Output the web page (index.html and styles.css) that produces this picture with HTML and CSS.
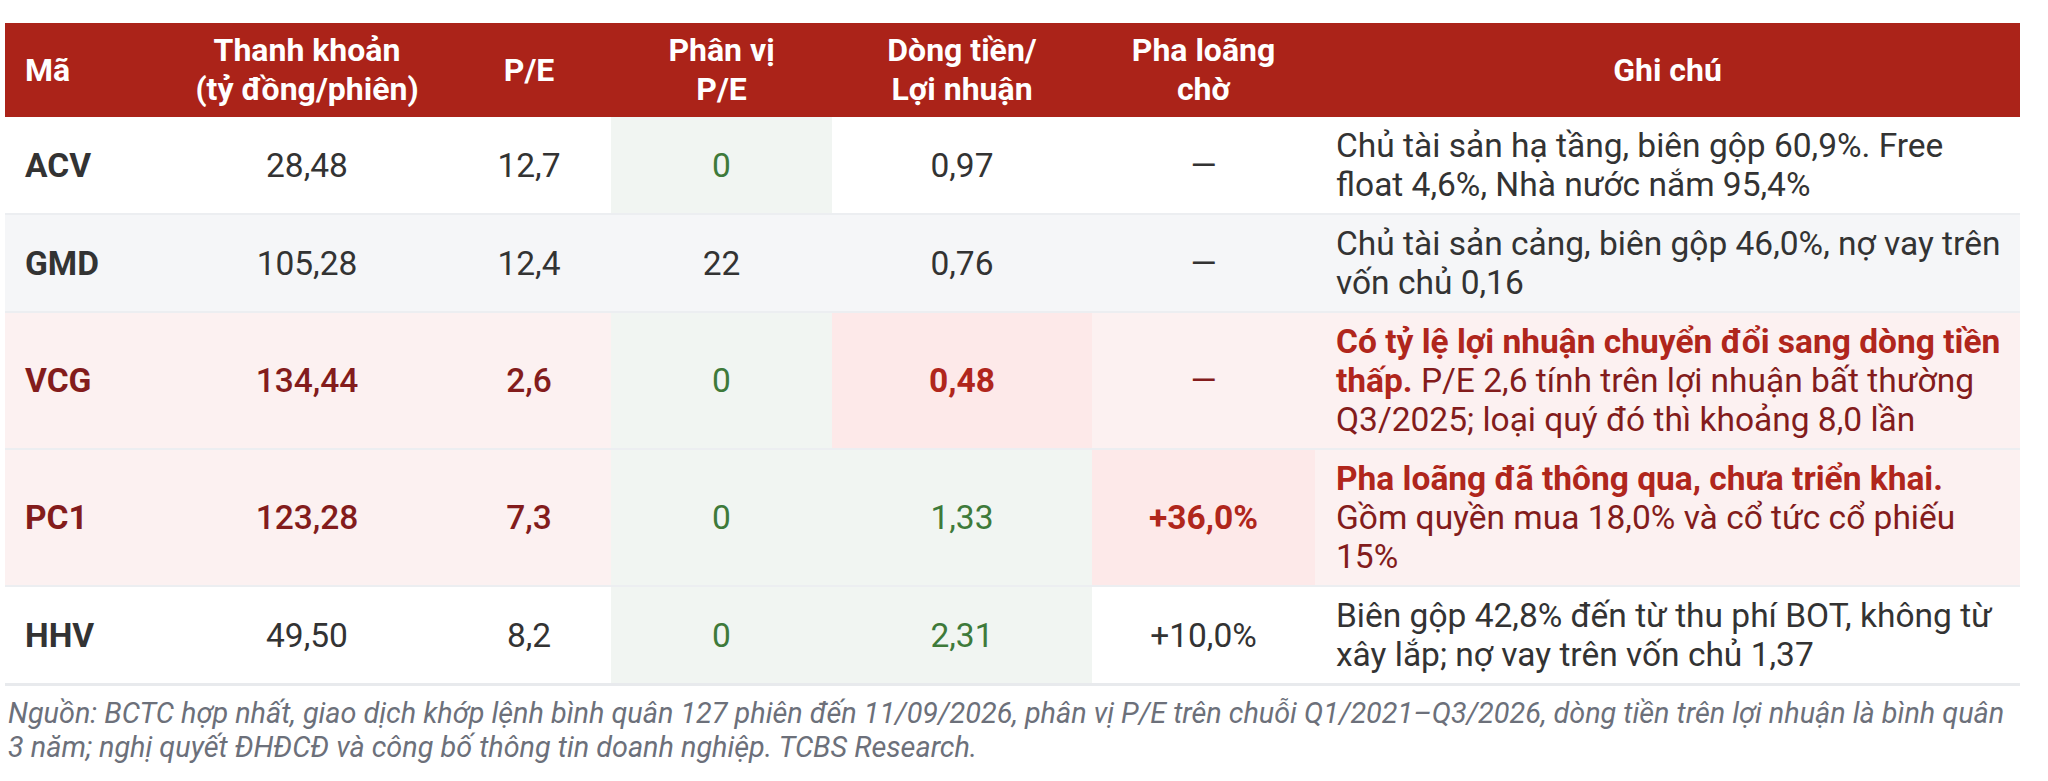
FILE: index.html
```html
<!DOCTYPE html>
<html lang="vi">
<head>
<meta charset="utf-8">
<title>Bảng so sánh</title>
<link rel="stylesheet" href="styles.css">
</head>
<body>
<div class="wrap">
  <table class="tbl">
    <colgroup>
      <col class="c-ma">
      <col class="c-tk">
      <col class="c-pe">
      <col class="c-pv">
      <col class="c-dt">
      <col class="c-pl">
      <col class="c-gc">
    </colgroup>
    <thead>
      <tr>
        <th class="left">Mã</th>
        <th>Thanh khoản<br>(tỷ đồng/phiên)</th>
        <th>P/E</th>
        <th>Phân vị<br>P/E</th>
        <th>Dòng tiền/<br>Lợi nhuận</th>
        <th>Pha loãng<br>chờ</th>
        <th>Ghi chú</th>
      </tr>
    </thead>
    <tbody>
      <tr class="r-white">
        <td class="ma">ACV</td>
        <td class="num">28,48</td>
        <td class="num">12,7</td>
        <td class="num green-bg green">0</td>
        <td class="num">0,97</td>
        <td class="num">—</td>
        <td class="note">Chủ tài sản hạ tầng, biên gộp 60,9%. Free float 4,6%, Nhà nước nắm 95,4%</td>
      </tr>
      <tr class="r-gray">
        <td class="ma">GMD</td>
        <td class="num">105,28</td>
        <td class="num">12,4</td>
        <td class="num">22</td>
        <td class="num">0,76</td>
        <td class="num">—</td>
        <td class="note">Chủ tài sản cảng, biên gộp 46,0%, nợ vay trên vốn chủ 0,16</td>
      </tr>
      <tr class="r-pink">
        <td class="ma maroon">VCG</td>
        <td class="num maroon med">134,44</td>
        <td class="num maroon med">2,6</td>
        <td class="num green-bg green">0</td>
        <td class="num pink-bg red bold">0,48</td>
        <td class="num maroon">—</td>
        <td class="note"><b class="red">Có tỷ lệ lợi nhuận chuyển đổi sang dòng tiền thấp.</b> <span class="maroon">P/E 2,6 tính trên lợi nhuận bất thường Q3/2025; loại quý đó thì khoảng 8,0 lần</span></td>
      </tr>
      <tr class="r-pink">
        <td class="ma maroon">PC1</td>
        <td class="num maroon med">123,28</td>
        <td class="num maroon med">7,3</td>
        <td class="num green-bg green">0</td>
        <td class="num green-bg green">1,33</td>
        <td class="num pink-bg red bold">+36,0%</td>
        <td class="note"><b class="red">Pha loãng đã thông qua, chưa triển khai.</b> <span class="maroon">Gồm quyền mua 18,0% và cổ tức cổ phiếu 15%</span></td>
      </tr>
      <tr class="r-white last">
        <td class="ma">HHV</td>
        <td class="num">49,50</td>
        <td class="num">8,2</td>
        <td class="num green-bg green">0</td>
        <td class="num green-bg green">2,31</td>
        <td class="num">+10,0%</td>
        <td class="note">Biên gộp 42,8% đến từ thu phí BOT, không từ xây lắp; nợ vay trên vốn chủ 1,37</td>
      </tr>
    </tbody>
  </table>
  <p class="source">Nguồn: BCTC hợp nhất, giao dịch khớp lệnh bình quân 127 phiên đến 11/09/2026, phân vị P/E trên chuỗi Q1/2021–Q3/2026, dòng tiền trên lợi nhuận là bình quân<br>3 năm; nghị quyết ĐHĐCĐ và công bố thông tin doanh nghiệp. TCBS Research.</p>
</div>
</body>
</html>
```

FILE: styles.css
```css
html, body {
  margin: 0;
  padding: 0;
  background: #ffffff;
}

body {
  font-family: Roboto, "Noto Sans", "Liberation Sans", sans-serif;
  color: #333333;
}

.wrap {
  padding: 23px 28px 0 5px;
}

.tbl {
  width: 2015px;
  border-collapse: collapse;
  table-layout: fixed;
}

.c-ma { width: 162px; }
.c-tk { width: 280px; }
.c-pe { width: 164px; }
.c-pv { width: 221px; }
.c-dt { width: 260px; }
.c-pl { width: 223px; }
.c-gc { width: 705px; }

.tbl th {
  background: #ab2319;
  color: #ffffff;
  font-weight: 700;
  font-size: 32px;
  line-height: 39px;
  padding: 8px 20px;
  text-align: center;
  vertical-align: middle;
}

.tbl th.left {
  text-align: left;
}

.tbl td {
  font-size: 33.5px;
  line-height: 39px;
  padding: 9px 20px;
  vertical-align: middle;
  border-bottom: 2px solid #eceef1;
}

.tbl tr.last td {
  border-bottom: 3px solid #e8eaed;
}

.r-white td { background: #ffffff; }
.r-gray td { background: #f5f6f8; }
.r-pink td { background: #fcf1f1; }

.tbl td.green-bg { background: #f1f5f2; }
.tbl td.pink-bg { background: #fde9e9; }

.ma {
  font-weight: 700;
  text-align: left;
}

.num {
  text-align: center;
}

.tbl td.note {
  text-align: left;
  padding-left: 21px;
  padding-right: 12px;
}

.green { color: #3e7a3a; }
.red { color: #b0261c; }
.maroon { color: #831c1c; }
.bold { font-weight: 700; }
.med { font-weight: 500; }

.note b {
  font-weight: 700;
}

.source {
  margin: 10px -20px 0 3px;
  font-size: 28.8px;
  line-height: 34px;
  letter-spacing: 0;
  font-style: italic;
  color: #6c707a;
}
```
